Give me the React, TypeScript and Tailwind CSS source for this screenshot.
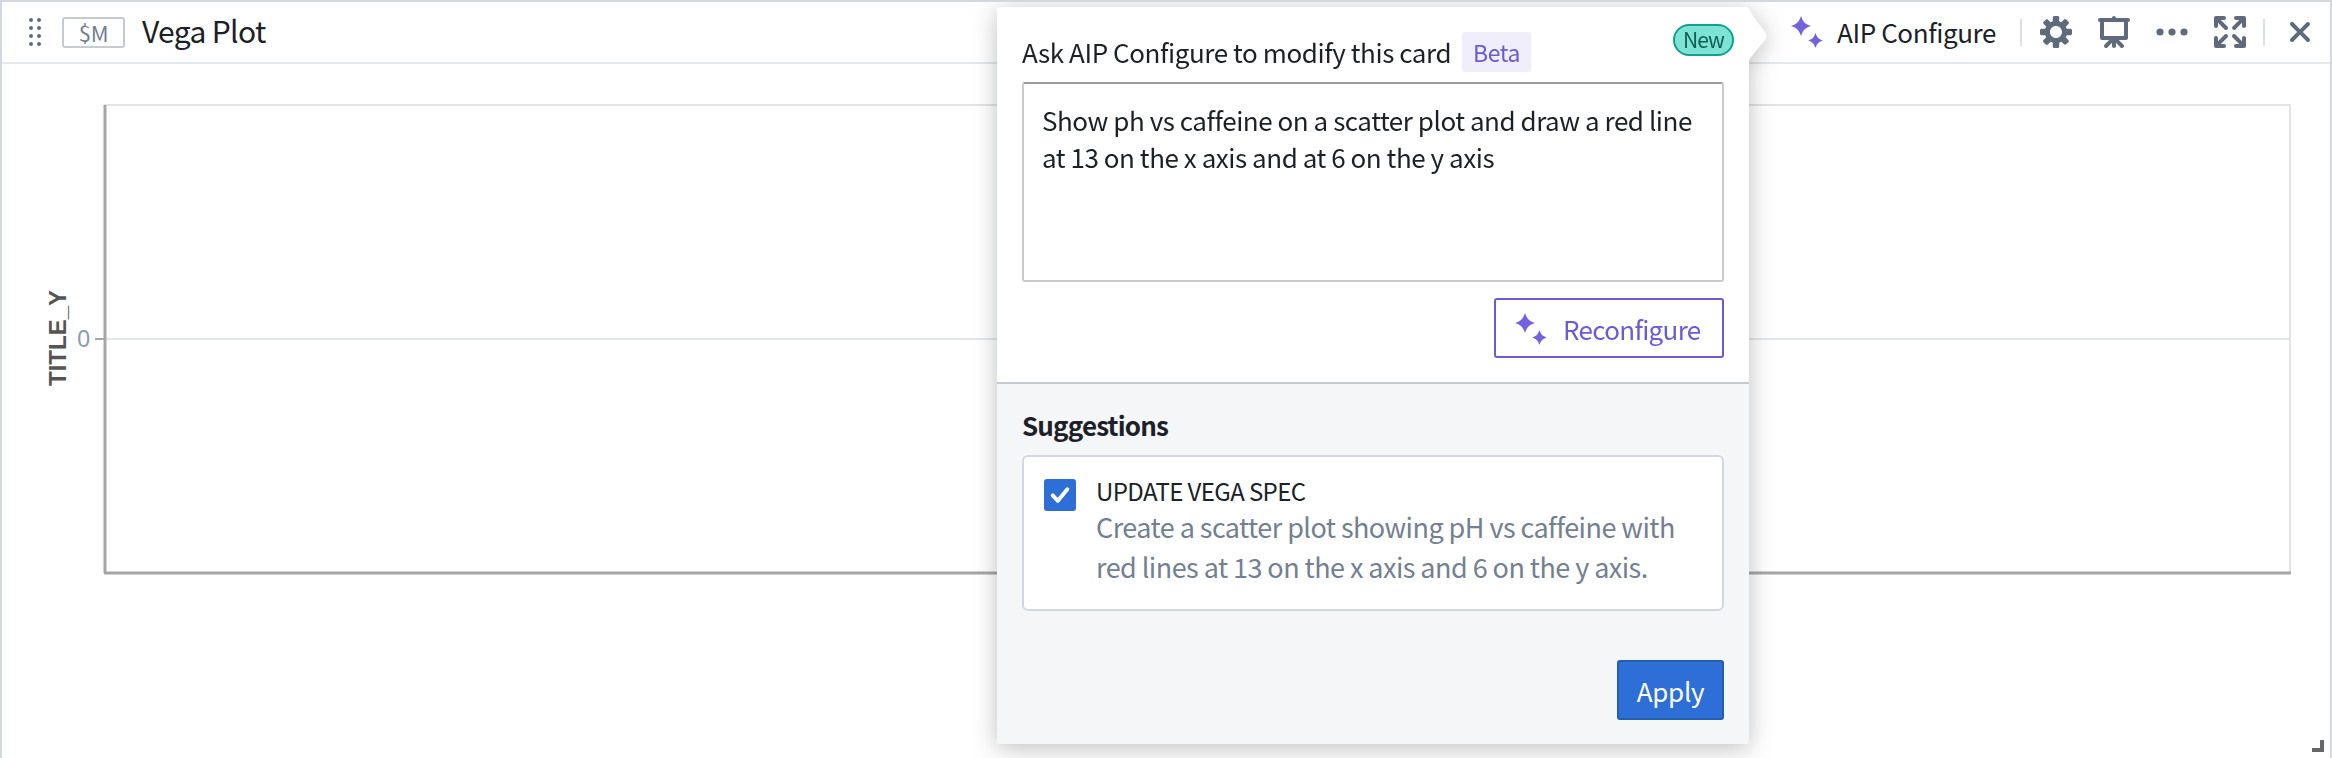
const font = "font-['Noto_Sans_CJK_SC',sans-serif]";

function Sparkles({ className }: { className?: string }) {
  return (
    <svg viewBox="0 0 32 32" className={className} fill="#7362de">
      <path d="M10 0C12 6 14 8 20 10 14 12 12 14 10 20 8 14 6 12 0 10 6 8 8 6 10 0z" />
      <path d="M24.500 17C26 21.500 27.500 23 32 24.500 27.500 26 26 27.500 24.500 32 23 27.500 21.500 26 17 24.500 21.500 23 23 21.500 24.500 17z" />
    </svg>
  );
}

function Icon({ d, className }: { d: string; className?: string }) {
  return (
    <svg viewBox="0 0 16 16" className={className} fill="#5f6b7c">
      <path fillRule="evenodd" d={d} />
    </svg>
  );
}

const cog =
  'M15.19 6.39h-1.85c-.11-.37-.27-.71-.45-1.04l1.36-1.36c.31-.31.31-.82 0-1.13l-1.13-1.13a.803.803 0 00-1.13 0l-1.36 1.36c-.33-.17-.67-.33-1.04-.44V.79c0-.44-.36-.8-.8-.8h-1.6c-.44 0-.8.36-.8.8v1.86c-.39.12-.75.28-1.1.47l-1.3-1.3c-.3-.3-.79-.3-1.09 0L1.82 2.91c-.3.3-.3.79 0 1.09l1.3 1.3c-.2.34-.36.7-.48 1.09H.79c-.44 0-.8.36-.8.8v1.6c0 .44.36.8.8.8h1.85c.11.37.27.71.45 1.04l-1.36 1.36c-.31.31-.31.82 0 1.13l1.13 1.13c.31.31.82.31 1.13 0l1.36-1.36c.33.18.67.33 1.04.44v1.86c0 .44.36.8.8.8h1.6c.44 0 .8-.36.8-.8v-1.86c.39-.12.75-.28 1.1-.47l1.3 1.3c.3.3.79.3 1.09 0l1.09-1.09c.3-.3.3-.79 0-1.09l-1.3-1.3c.19-.35.36-.71.48-1.1h1.85c.44 0 .8-.36.8-.8v-1.6a.816.816 0 00-.81-.79zm-7.2 4.6c-1.66 0-3-1.34-3-3s1.34-3 3-3 3 1.34 3 3-1.34 3-3 3z';
const presentation =
  'M15 1H9c0-.55-.45-1-1-1S7 .45 7 1H1c-.55 0-1 .45-1 1s.45 1 1 1v8c0 .55.45 1 1 1h3.59L3.3 14.29c-.19.18-.3.43-.3.71a1.003 1.003 0 001.71.71L7 13.41V15c0 .55.45 1 1 1s1-.45 1-1v-1.59l2.29 2.29c.18.19.43.3.71.3a1.003 1.003 0 00.71-1.71L10.41 12H14c.55 0 1-.45 1-1V3c.55 0 1-.45 1-1s-.45-1-1-1zm-2 9H3V3h10v7z';
const fullscreen =
  'M3.41 2H5c.55 0 1-.45 1-1s-.45-1-1-1H1C.45 0 0 .45 0 1v4c0 .55.45 1 1 1s1-.45 1-1V3.41L5.29 6.7c.19.18.44.3.71.3a1.003 1.003 0 00.71-1.71L3.41 2zM15 0h-4c-.55 0-1 .45-1 1s.45 1 1 1h1.59L9.29 5.29A1.003 1.003 0 0010.7 6.71L14 3.41V5c0 .55.45 1 1 1s1-.45 1-1V1c0-.55-.45-1-1-1zM6 9c-.28 0-.53.11-.71.29L2 12.59V11c0-.55-.45-1-1-1s-1 .45-1 1v4c0 .55.45 1 1 1h4c.55 0 1-.45 1-1s-.45-1-1-1H3.41l3.29-3.29A1.003 1.003 0 006 9zm9 1c-.55 0-1 .45-1 1v1.59L10.71 9.3A.965.965 0 0010 9a1.003 1.003 0 00-.71 1.71L12.59 14H11c-.55 0-1 .45-1 1s.45 1 1 1h4c.55 0 1-.45 1-1v-4c0-.55-.45-1-1-1z';
const cross =
  'M9.41 8l3.29-3.29c.19-.18.3-.43.3-.71a1.003 1.003 0 00-1.71-.71L8 6.59l-3.29-3.3a1.003 1.003 0 00-1.42 1.42L6.59 8 3.3 11.29c-.19.18-.3.43-.3.71a1.003 1.003 0 001.71.71L8 9.41l3.29 3.29c.18.19.43.3.71.3a1.003 1.003 0 00.71-1.71L9.41 8z';

function Header() {
  return (
    <div className="flex h-[62px] items-center border-b-2 border-[#e5e8ec] pr-[14px] pl-[27px]">
      <div className="grid grid-cols-2 gap-x-[4px] gap-y-[4px]">
        {Array.from({ length: 8 }).map((_, i) => (
          <span key={i} className="h-[4px] w-[4px] rounded-full bg-[#5f6b7c]" />
        ))}
      </div>
      <span className="ml-[21px] flex h-[31px] w-[63px] items-center justify-center rounded-[3px] border-2 border-[#c5cbd3] text-[22px] tracking-[-0.3px] text-[#738091]">
        $M
      </span>
      <span className="mb-[5px] ml-[17px] text-[30px] leading-none tracking-[-0.65px] text-[#1c2127]">Vega Plot</span>
      <div className="ml-auto flex items-center">
        <Sparkles className="h-[32px] w-[32px]" />
        <span className="ml-[14px] text-[26px] leading-none tracking-[-0.4px] text-[#1c2127]">AIP Configure</span>
        <span className="ml-[24px] h-[27px] w-[2px] bg-[#dce0e5]" />
        <Icon d={cog} className="ml-[18px] h-[32px] w-[32px]" />
        <Icon d={presentation} className="ml-[26px] h-[32px] w-[32px]" />
        <svg viewBox="0 0 32 8" className="ml-[26px] h-[8px] w-[32px]" fill="#5f6b7c">
          <circle cx="4" cy="4" r="3.600" />
          <circle cx="16" cy="4" r="3.600" />
          <circle cx="28" cy="4" r="3.600" />
        </svg>
        <Icon d={fullscreen} className="ml-[26px] h-[32px] w-[32px]" />
        <span className="ml-[17px] h-[27px] w-[2px] bg-[#dce0e5]" />
        <Icon d={cross} className="ml-[19px] h-[32px] w-[32px]" />
      </div>
    </div>
  );
}

function Chart() {
  return (
    <div className="relative flex-1">
      <svg viewBox="0 0 2328 694" className="h-[694px] w-[2328px]">
        <rect x="103" y="41" width="2185" height="468" fill="none" stroke="#e3e3e3" strokeWidth="2" />
        <line x1="93" y1="275" x2="103" y2="275" stroke="#a6a6a6" strokeWidth="2" />
        <line x1="103" y1="275" x2="2288" y2="275" stroke="#e3e6ea" strokeWidth="2" />
        <line x1="103" y1="41" x2="103" y2="509" stroke="#a6a6a6" strokeWidth="3" />
        <line x1="102" y1="509" x2="2289" y2="509" stroke="#a6a6a6" strokeWidth="3" />
        <text x="88" y="283" textAnchor="end" fontFamily="Liberation Sans, sans-serif" fontSize="23" fill="#8a9bb0">
          0
        </text>
        <text
          transform="translate(64 274) rotate(-90)"
          textAnchor="middle"
          fontFamily="Liberation Sans, sans-serif"
          fontSize="24"
          fontWeight="700"
          fill="#555"
        >
          TITLE_Y
        </text>
        <path d="M2322 676v12h-12v-4h8v-8z" fill="#666" />
      </svg>
    </div>
  );
}

function Popover() {
  return (
    <div className="absolute top-[5px] left-[995px] w-[752px] drop-shadow-[0_4px_12px_rgba(17,20,24,0.28)]">
      <svg viewBox="0 0 20 54" className="absolute top-[1px] right-[-19px] h-[54px] w-[20px]" fill="#fff">
        <path d="M0 0H1C3 6 9 13 17 24 19 27 19 29 17 32 9 42 3 48 0 54z" />
      </svg>
      <div className="overflow-hidden rounded-[3px] bg-white">
        <div className="relative px-[25px] pt-[25px] pb-[24px]">
          <span className="absolute top-[17px] right-[15px] flex h-[32px] w-[61px] items-center justify-center rounded-full border-2 border-[#14a08e] bg-[#7de3d4] text-[21px] tracking-[-0.9px] text-[#105d54]">
            New
          </span>
          <div className="flex h-[40px] items-center">
            <span className="text-[26px] leading-none tracking-[-0.43px] text-[#1c2127]">Ask AIP Configure to modify this card</span>
            <span className="ml-[11px] flex h-[40px] w-[69px] items-center justify-center rounded-[3px] bg-[#f0eefb] text-[23px] tracking-[-0.4px] text-[#6b5bd2]">
              Beta
            </span>
          </div>
          <textarea
            readOnly
            defaultValue="Show ph vs caffeine on a scatter plot and draw a red line at 13 on the x axis and at 6 on the y axis"
            className="mt-[10px] block h-[200px] w-full resize-none rounded-[3px] border-2 border-[#c8cacc] border-t-[#9a9c9e] pt-[17px] pr-[10px] pl-[18px] text-[26px] leading-[37px] tracking-[-0.46px] text-[#1c2127] outline-none"
          />
          <div className="mt-[16px] flex justify-end">
            <button className="flex h-[60px] w-[230px] items-center rounded-[3px] border-2 border-[#6b5bd9] pl-[19px] text-[26px] tracking-[-0.7px] text-[#6b5bd9]">
              <Sparkles className="mt-[2px] h-[32px] w-[32px]" />
              <span className="ml-[16px]">Reconfigure</span>
            </button>
          </div>
        </div>
        <div className="border-t-2 border-[#c5cbd3] bg-[#f5f6f8] px-[25px] pt-[23px] pb-[24px]">
          <div className="text-[26px] leading-[36px] font-semibold tracking-[-0.85px] text-[#1c2127]">Suggestions</div>
          <div className="mt-[12px] flex h-[156px] rounded-[6px] border-2 border-[#d3d8e0] bg-white pt-[22px] pl-[20px]">
            <span className="flex h-[32px] w-[32px] items-center justify-center rounded-[3px] bg-[#2d6fd6]">
              <svg viewBox="0 0 16 16" className="h-[26px] w-[26px]" fill="none" stroke="#fff" strokeWidth="2.400" strokeLinecap="round" strokeLinejoin="round">
                <path d="M3.500 8.200 6.700 11.600 12.500 4.500" />
              </svg>
            </span>
            <div className="-mt-[4px] ml-[20px]">
              <div className="text-[24px] leading-[32px] tracking-[-0.6px] text-[#1c2127]">UPDATE VEGA SPEC</div>
              <div className="w-[600px] text-[27px] leading-[40px] tracking-[-0.55px] text-[#738091]">
                Create a scatter plot showing pH vs caffeine with red lines at 13 on the x axis and 6 on the y axis.
              </div>
            </div>
          </div>
          <div className="mt-[49px] flex justify-end">
            <button className="flex h-[60px] w-[107px] items-center justify-center rounded-[3px] border-2 border-[#215db0] bg-[#2d6fd6] text-[26px] tracking-[-0.3px] text-white">
              Apply
            </button>
          </div>
        </div>
      </div>
    </div>
  );
}

export default function App() {
  return (
    <div className={`relative h-[758px] w-[2332px] overflow-hidden border-x-2 border-t-2 border-[#d3d8de] bg-white ${font}`}>
      <Header />
      <Chart />
      <Popover />
    </div>
  );
}
